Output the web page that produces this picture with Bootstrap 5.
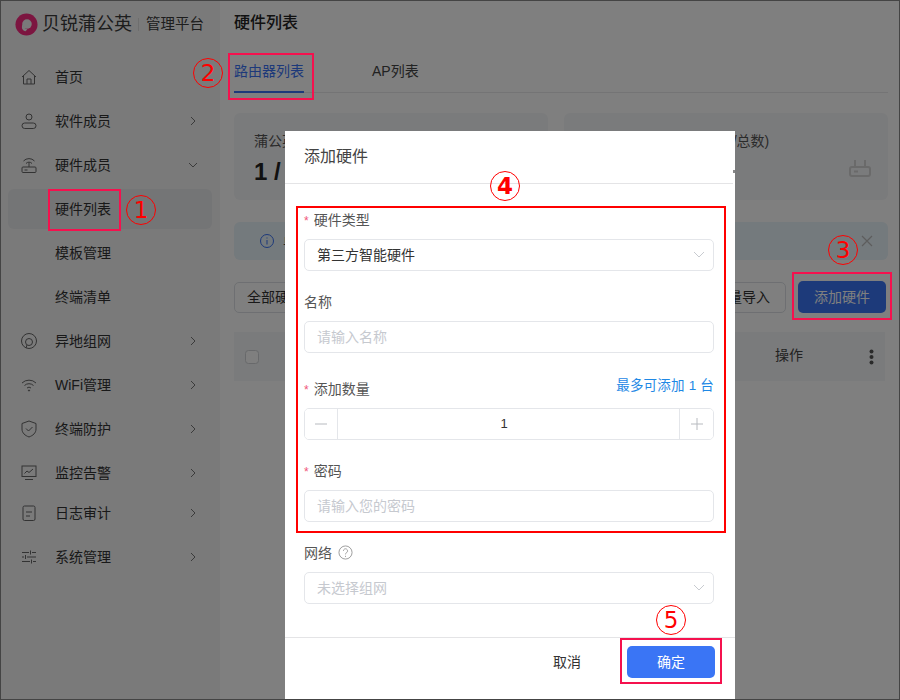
<!DOCTYPE html>
<html lang="zh-CN">
<head>
<meta charset="utf-8">
<title>添加硬件</title>
<link href="https://cdn.jsdelivr.net/npm/bootstrap@5.3.0/dist/css/bootstrap.min.css" rel="stylesheet">
<style>
html,body{margin:0;height:700px;overflow:hidden;background:#fff}
body{font-family:"Liberation Sans","Noto Sans CJK SC",sans-serif;font-size:14px;color:#333}
.stage{position:relative;width:900px;height:700px;overflow:hidden;background:#fff}
.side{width:220px;height:700px;flex:none;background:#f4f4f5;padding:0 8px}
.brand{height:57px;padding:0 0 9px 7px;color:#3a3a3a}
.brand-name{font-size:18px;line-height:24px;margin-left:4px}
.brand-sub{font-size:14.5px;line-height:24px;margin-left:14px;position:relative}
.brand-sub::before{content:"";position:absolute;left:-8px;top:6px;height:13px;width:1px;background:#ddd}
.menu-row{height:40px;margin-bottom:4px;border-radius:6px;padding:0 13px;color:#333;line-height:40px}
.menu-row.tight{margin-bottom:0}
.menu-row.on{background:#e9eaec}
.menu-ico{width:16px;height:18px;flex:none;margin-right:18px;color:#666}
.menu-gap{width:16px;flex:none;margin-right:18px}
.menu-arrow{width:10px;height:10px;flex:none;margin-left:auto;margin-right:1px;color:#777}
.main{flex:1;min-width:0;padding:0 12px 0 14px;background:#fff}
.head-title{height:46px;font-size:16px;font-weight:500;line-height:46px;color:#222}
.tab-strip{height:47px;border-bottom:1px solid #e8e8ea;gap:68px;font-size:14px}
.tab-item{height:47px;line-height:50px;color:#444;white-space:nowrap}
.tab-item.on{color:#3a73f5;border-bottom:2px solid #3a73f5}
.stat-row{margin-top:20px;gap:16px}
.stat-box{height:87px;background:#f5f6f8;border-radius:6px;padding:18px 20px;position:relative;overflow:hidden;white-space:nowrap}
.stat-a{width:314px}.stat-b{width:324px}
.stat-name{line-height:20px;color:#555}
.stat-b .stat-name{margin-left:4px}
.stat-num{font-size:24px;line-height:32px;font-weight:700;color:#222;margin-top:5px}
.stat-ico{position:absolute;right:17px;top:46px;width:22px;height:20px;color:#d4d4d4}
.tip-bar{margin-top:22px;height:38px;background:#e8f4fa;border-radius:6px;padding:0 14px 0 25px;color:#444;width:654px}
.tip-ico{width:16px;height:16px;color:#3a73f5;margin-right:8px}
.tip-x{margin-left:auto;width:14px;height:14px;color:#bbb;margin-right:0}
.tool-row{margin-top:21px;height:32px;width:652px}
.btn-ghost{height:31px;border:1px solid #dcdfe4;border-radius:5px;background:#fff;color:#333;font-size:14px;padding:0 12px;line-height:29px}
.btn-ghost.roomy{padding:0 15px}
.btn-blue{height:32px;width:88px;border:0;border-radius:5px;background:#3a75f5;color:#fff;font-size:14px;padding:0}
.grid-head{margin-top:19px;height:49px;width:651px;background:#f5f6f8;padding:0 11px 0 11px}
.check-box{width:14px;height:14px;border:1px solid #d0d2d6;border-radius:2px;background:#fff;margin:0}
.grid-op{margin-left:auto;margin-right:66px;margin-bottom:2px;color:#444}
.veil{position:absolute;inset:0;background:rgba(0,0,0,.5);z-index:10}
.dialog{position:absolute;left:285px;top:131px;width:450px;height:569px;background:#fff;z-index:20;overflow:hidden}
.dialog-head{height:53px;padding:0 19px;line-height:52px;font-size:16px;color:#444;border-bottom:1px solid #e4e4e6;width:448px}
.dialog-body{padding:0 21px 0 19px;height:453px}
.edge-tick{position:absolute;left:448px;top:39px;width:2px;height:3px;background:#888}
.field-label{line-height:20px;color:#555;white-space:nowrap}
.req{color:#f0557a;font-size:12px;margin-right:5px}
.form-control.fld,.form-select.fld{height:32px;border:1px solid #e4e6ea;border-radius:5px;font-size:14px;padding:0 12px;color:#333;line-height:30px;box-shadow:none}
.form-control.fld::placeholder{color:#c6c9cf;opacity:1}
.form-select.fld{background-image:url("data:image/svg+xml,%3csvg xmlns='http://www.w3.org/2000/svg' viewBox='0 0 12 8'%3e%3cpath fill='none' stroke='%23c8cbd0' stroke-width='1' d='M1 1l5 5 5-5'/%3e%3c/svg%3e");background-size:12px 8px;background-position:right 8px center}
.form-select.fld.mute{color:#c6c9cf;background-color:#fff}
.label-1{margin-top:26px;margin-bottom:8px}
.label-2{margin-top:21px;margin-bottom:9px}
.label-3{margin-top:26px;margin-bottom:8px}
.label-4{margin-top:21px;margin-bottom:8px}
.label-5{margin-top:21px;margin-bottom:9px}
.quota{color:#1e88e5;font-size:13.5px;letter-spacing:.2px;position:relative;top:-3px}
.step-box{height:32px;border:1px solid #e4e6ea;border-radius:5px;overflow:hidden}
.step-btn{width:32px;flex:none;color:#b7babf;background:#fff}
.step-btn.wide{width:33px}
.step-btn svg{width:12px;height:12px}
.step-val{flex:1;text-align:center;border-left:1px solid #e4e6ea;border-right:1px solid #e4e6ea;line-height:30px;color:#333;font-size:13px;padding-right:9px}
.hint-ico{width:15px;height:15px;color:#999;margin-left:6px;vertical-align:-2px}
.dialog-foot{height:63px;border-top:1px solid #e4e4e6;padding:8px 20px 0 0;gap:46px}
.foot-cancel{height:32px;background:none;border:0;color:#333;font-size:14px;padding:0}
.foot-ok{height:32px;width:88px;border:0;border-radius:5px;background:#3a75f5;color:#fff;font-size:14px;padding:0}
.mark-box{position:absolute;z-index:30;border:2px solid #f5114e}
.mark-red{border-color:#f00;border-width:2px}
.mark-num{position:absolute;z-index:30;width:30px;height:30px;border:1px solid #f00;border-radius:50%;color:#f00;font-size:23px;line-height:28px;text-align:center;font-family:"DejaVu Sans",sans-serif}
.m1{left:126px;top:195px}.m2{left:193px;top:58px}.m3{left:828px;top:235px}.m4{left:490px;top:171px;font-weight:700}.m5{left:656px;top:605px}
.b1{left:48px;top:189px;width:73px;height:42px}
.b2{left:228px;top:53px;width:86px;height:47px}
.b3{left:792px;top:272px;width:100px;height:48px}
.b4{left:296px;top:206px;width:430px;height:327px}
.b5{left:620px;top:638px;width:102px;height:46px}
.frame-line{position:absolute;inset:0;border:1px solid #444;z-index:40;pointer-events:none}
</style>
</head>
<body>
<div class="stage">
  <div class="d-flex">
    <aside class="side">
      <div class="brand d-flex align-items-center">
        <svg width="23" height="23" viewBox="0 0 24 24"><circle cx="12" cy="12" r="11.500" fill="#f82a80"/><circle cx="12.500" cy="11.500" r="5" fill="#f4f4f5"/><path d="M8 12c-2 3 0 7 3 7l2-2c-2 0-4-2-5-5z" fill="#f4f4f5"/></svg>
        <span class="brand-name">贝锐蒲公英</span><span class="brand-sub">管理平台</span>
      </div>
      <div class="menu-row d-flex align-items-center"><svg class="menu-ico" viewBox="0 0 16 18" fill="none" stroke="currentColor"><path d="M1 9l7-6.500L15 9M2.500 8v8h11V8M6 16v-5h4v5"/></svg><span>首页</span></div>
      <div class="menu-row d-flex align-items-center"><svg class="menu-ico" viewBox="0 0 16 18" fill="none" stroke="currentColor"><circle cx="8" cy="5" r="3"/><rect x="1" y="11" width="14" height="5.500" rx="2.700"/></svg><span>软件成员</span><svg class="menu-arrow" viewBox="0 0 10 10" fill="none" stroke="currentColor"><path d="M3 1l4 4-4 4"/></svg></div>
      <div class="menu-row d-flex align-items-center"><svg class="menu-ico" viewBox="0 0 16 18" fill="none" stroke="currentColor"><path d="M2.500 5a7.500 7.500 0 0 1 11 0M5 7.500a4 4 0 0 1 6 0M8 6.500V11"/><rect x="1" y="11" width="14" height="5.500" rx="1"/><path d="M3.500 14h3"/></svg><span>硬件成员</span><svg class="menu-arrow" viewBox="0 0 10 10" fill="none" stroke="currentColor"><path d="M1 3l4 4 4-4"/></svg></div>
      <div class="menu-row on d-flex align-items-center"><span class="menu-gap"></span><span>硬件列表</span></div>
      <div class="menu-row d-flex align-items-center"><span class="menu-gap"></span><span>模板管理</span></div>
      <div class="menu-row d-flex align-items-center"><span class="menu-gap"></span><span>终端清单</span></div>
      <div class="menu-row d-flex align-items-center"><svg class="menu-ico" viewBox="0 0 16 18" fill="none" stroke="currentColor"><circle cx="8" cy="9" r="7.500"/><circle cx="8" cy="10" r="3.500"/><path d="M5 16l1-3"/></svg><span>异地组网</span><svg class="menu-arrow" viewBox="0 0 10 10" fill="none" stroke="currentColor"><path d="M3 1l4 4-4 4"/></svg></div>
      <div class="menu-row d-flex align-items-center"><svg class="menu-ico" viewBox="0 0 16 18" fill="none" stroke="currentColor"><path d="M1 7a10 10 0 0 1 14 0M3.500 9.500a6.500 6.500 0 0 1 9 0M6 12a3 3 0 0 1 4 0"/><circle cx="8" cy="14.500" r=".6" fill="currentColor"/></svg><span>WiFi管理</span><svg class="menu-arrow" viewBox="0 0 10 10" fill="none" stroke="currentColor"><path d="M3 1l4 4-4 4"/></svg></div>
      <div class="menu-row d-flex align-items-center"><svg class="menu-ico" viewBox="0 0 16 18" fill="none" stroke="currentColor"><path d="M8 1l7 2.500V9c0 4-3 6.500-7 8-4-1.500-7-4-7-8V3.500z"/><path d="M5 8.500l2.500 2.500L11.500 7"/></svg><span>终端防护</span><svg class="menu-arrow" viewBox="0 0 10 10" fill="none" stroke="currentColor"><path d="M3 1l4 4-4 4"/></svg></div>
      <div class="menu-row tight d-flex align-items-center"><svg class="menu-ico" viewBox="0 0 16 18" fill="none" stroke="currentColor"><rect x="1" y="2" width="14" height="10.500"/><path d="M3.500 9.500L6 7l2 1.500L12 5M4 15.500h8"/></svg><span>监控告警</span><svg class="menu-arrow" viewBox="0 0 10 10" fill="none" stroke="currentColor"><path d="M3 1l4 4-4 4"/></svg></div>
      <div class="menu-row d-flex align-items-center"><svg class="menu-ico" viewBox="0 0 16 18" fill="none" stroke="currentColor"><rect x="2" y="2" width="12" height="14.500" rx="1.500"/><path d="M5 8h6M5 12h4"/></svg><span>日志审计</span><svg class="menu-arrow" viewBox="0 0 10 10" fill="none" stroke="currentColor"><path d="M3 1l4 4-4 4"/></svg></div>
      <div class="menu-row d-flex align-items-center"><svg class="menu-ico" viewBox="0 0 16 18" fill="none" stroke="currentColor"><path d="M1 4.500h7M11 4.500h4M1 9h2M6 9h9M1 13.500h8M12 13.500h3M9.500 2.500v4M4.500 7v4M10.500 11.500v4"/></svg><span>系统管理</span><svg class="menu-arrow" viewBox="0 0 10 10" fill="none" stroke="currentColor"><path d="M3 1l4 4-4 4"/></svg></div>
    </aside>
    <main class="main">
      <div class="head-title">硬件列表</div>
      <div class="tab-strip d-flex">
        <div class="tab-item on">路由器列表</div>
        <div class="tab-item">AP列表</div>
      </div>
      <div class="stat-row d-flex">
        <div class="stat-box stat-a">
          <div class="stat-name">蒲公英路由器(已用/总数)</div>
          <div class="stat-num">1 / 5</div>
        </div>
        <div class="stat-box stat-b">
          <div class="stat-name">第三方硬件授权数(已用/总数)</div>
          <svg class="stat-ico" viewBox="0 0 22 20" fill="none" stroke="currentColor" stroke-width="2"><path d="M6 8V1M16 8V1"/><rect x="1" y="8" width="20" height="9" rx="2"/><path d="M5 12.500h4"/></svg>
        </div>
      </div>
      <div class="tip-bar d-flex align-items-center">
        <svg class="tip-ico" viewBox="0 0 16 16" fill="none" stroke="currentColor"><circle cx="8" cy="8" r="6.500"/><path d="M8 7v4.500M8 4.500v1"/></svg>
        <span>单</span>
        <svg class="tip-x" viewBox="0 0 14 14" fill="none" stroke="currentColor" stroke-width="1.200"><path d="M2 2l10 10M12 2L2 12"/></svg>
      </div>
      <div class="tool-row d-flex align-items-center justify-content-between">
        <button class="btn-ghost" type="button">全部硬件</button>
        <div class="d-flex gap-2 align-items-center">
          <button class="btn-ghost roomy me-1" type="button">批量导入</button>
          <button class="btn-blue" type="button">添加硬件</button>
        </div>
      </div>
      <div class="grid-head d-flex align-items-center">
        <input class="check-box form-check-input" type="checkbox">
        <span class="grid-op">操作</span>
        <svg width="5" height="16" viewBox="0 0 5 16" fill="#555"><circle cx="2.500" cy="2.500" r="2"/><circle cx="2.500" cy="8" r="2"/><circle cx="2.500" cy="13.500" r="2"/></svg>
      </div>
    </main>
  </div>

  <div class="veil"></div>

  <div class="dialog d-flex flex-column">
    <div class="dialog-head">添加硬件</div>
    <div class="edge-tick"></div>
    <div class="dialog-body">
      <div class="field-label label-1"><span class="req">*</span>硬件类型</div>
      <select class="form-select fld"><option>第三方智能硬件</option></select>
      <div class="field-label label-2">名称</div>
      <input class="form-control fld" placeholder="请输入名称">
      <div class="field-label label-3 d-flex justify-content-between"><span><span class="req">*</span>添加数量</span><span class="quota">最多可添加 1 台</span></div>
      <div class="step-box d-flex">
        <div class="step-btn d-flex align-items-center justify-content-center"><svg viewBox="0 0 12 12" stroke="currentColor"><path d="M0 6h12"/></svg></div>
        <div class="step-val">1</div>
        <div class="step-btn wide d-flex align-items-center justify-content-center"><svg viewBox="0 0 12 12" stroke="currentColor"><path d="M0 6h12M6 0v12"/></svg></div>
      </div>
      <div class="field-label label-4"><span class="req">*</span>密码</div>
      <input class="form-control fld" placeholder="请输入您的密码">
      <div class="field-label label-5">网络<svg class="hint-ico" viewBox="0 0 16 16" fill="none" stroke="currentColor"><circle cx="8" cy="8" r="7"/><path d="M5.800 6.200a2.200 2.200 0 1 1 3.400 1.900c-.8.500-1.200 1-1.200 1.900M8 11.500v1.200"/></svg></div>
      <select class="form-select fld mute"><option>未选择组网</option></select>
    </div>
    <div class="dialog-foot d-flex align-items-start justify-content-end">
      <button class="foot-cancel" type="button">取消</button>
      <button class="foot-ok" type="button">确定</button>
    </div>
  </div>

  <div class="mark-box b1"></div>
  <div class="mark-box b2"></div>
  <div class="mark-box b3"></div>
  <div class="mark-box mark-red b4"></div>
  <div class="mark-box b5"></div>
  <div class="mark-num m1">1</div>
  <div class="mark-num m2">2</div>
  <div class="mark-num m3">3</div>
  <div class="mark-num m4">4</div>
  <div class="mark-num m5">5</div>
  <div class="frame-line"></div>
</div>
<script src="https://cdn.jsdelivr.net/npm/bootstrap@5.3.0/dist/js/bootstrap.bundle.min.js"></script>
</body>
</html>
